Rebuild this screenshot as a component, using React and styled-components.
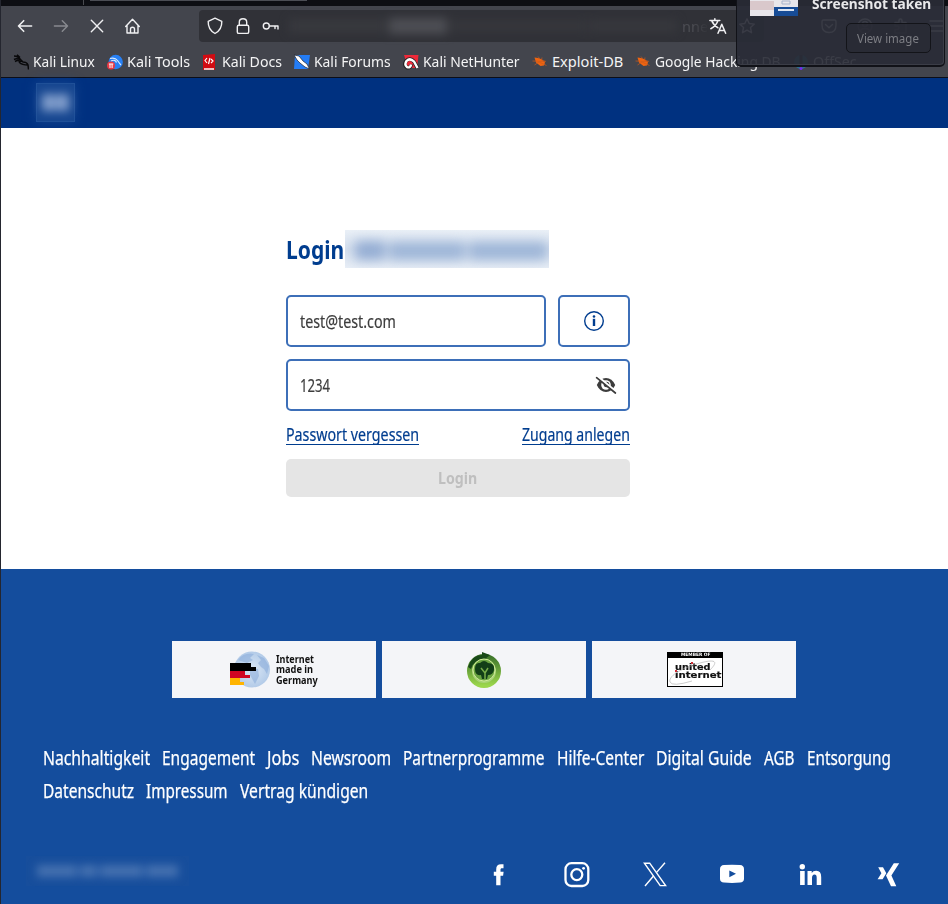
import React, { useLayoutEffect, useRef, useState } from "react";
import styled, { createGlobalStyle } from "styled-components";

const Global = createGlobalStyle`
  * { box-sizing: border-box; }
  body { margin: 0; background: #fff; font-family: "Noto Sans", "Open Sans", sans-serif; overflow: hidden; }
  a { color: inherit; text-decoration: none; }
`;

/* Sets a label at a fixed width, condensing its letters to fit. */
const FitBox = styled.span`
  display: block;
  flex: none;
  width: ${(p) => p.$w}px;
  white-space: nowrap;
`;
const FitInner = styled.span`
  display: inline-block;
  transform-origin: 0 0;
`;
function Fit({ w, children }) {
  const ref = useRef(null);
  const [s, setS] = useState(1);
  useLayoutEffect(() => {
    setS(w / ref.current.offsetWidth);
  }, [w]);
  return (
    <FitBox $w={w}>
      <FitInner ref={ref} style={{ transform: `scaleX(${s})` }}>{children}</FitInner>
    </FitBox>
  );
}

const Window = styled.div`
  position: relative;
  width: 948px;
  height: 904px;
  border-left: 1px solid #24262f;
  display: flex;
  flex-direction: column;
  overflow: hidden;
`;
const TabStrip = styled.div`
  height: 6px;
  flex: none;
  display: flex;
  background: #0d0e13;
`;
const TabDivider = styled.div`
  width: 1px;
  height: 5px;
  margin-left: 82px;
  background: #4a4b50;
`;
const TabEdge = styled.div`
  width: 217px;
  height: 1px;
  margin-left: 6px;
  background: #4b4d54;
`;
const Chrome = styled.div`
  height: 72px;
  flex: none;
  background: #43454d;
  border-bottom: 1px solid #0c0e18;
`;
const NavBar = styled.div`
  height: 40px;
  display: flex;
  align-items: center;
  color: #f0f0f2;
`;
const NavButtons = styled.div`
  width: 198px;
  display: flex;
  gap: 16px;
  padding-left: 14px;
`;
const Glyph = styled.svg`
  display: block;
  flex: none;
  width: ${(p) => p.$w || 20}px;
  height: ${(p) => p.$h || p.$w || 20}px;
  margin-left: ${(p) => p.$ml || 0}px;
  opacity: ${(p) => (p.$dim ? 0.4 : 1)};
  fill: none;
  stroke: currentColor;
  stroke-width: ${(p) => p.$sw || 1.4};
  stroke-linecap: round;
  stroke-linejoin: round;
`;
const UrlBar = styled.div`
  width: 565px;
  height: 32px;
  border-radius: 4px;
  background: #303137;
  display: flex;
  align-items: center;
  padding-left: 6px;
  flex: none;
`;
const UrlIcons = styled.div`
  display: flex;
  gap: 8px;
  width: 84px;
`;
const Obscured = styled.div`
  width: 393px;
  height: 20px;
  flex: none;
  display: flex;
  gap: 2px;
  align-items: center;
  filter: blur(5px);
`;
const Smudge = styled.div`
  width: ${(p) => p.$w}px;
  height: ${(p) => p.$h || 12}px;
  flex: none;
  background: ${(p) => p.$c};
`;
const UrlTail = styled.div`
  width: 27px;
  font-size: 14.5px;
  color: #4c4d53;
  overflow: hidden;
  -webkit-mask-image: linear-gradient(90deg, #000 40%, transparent);
  mask-image: linear-gradient(90deg, #000 40%, transparent);
`;
const Actions = styled.div`
  display: flex;
  gap: 16px;
  margin-left: 55px;
`;
const Bookmarks = styled.div`
  display: flex;
  height: 31px;
  padding-left: 12px;
  align-items: center;
  font-size: 14.6px;
  line-height: 20px;
  color: #f4f4f5;
`;
const Bookmark = styled.a`
  display: flex;
  align-items: center;
  width: ${(p) => p.$w}px;
  height: 20px;
  margin-top: -2px;
  flex: none;
  gap: 4px;
`;
const Favicon = styled.svg`
  display: block;
  width: 16px;
  height: 16px;
  flex: none;
  position: relative;
  top: 1px;
`;

const Toast = styled.div`
  position: absolute;
  left: 735px;
  top: -34px;
  width: 209px;
  height: 101px;
  border: 1px solid #111218;
  border-bottom-width: 2px;
  border-radius: 5px;
  background: rgba(41, 43, 54, 0.92);
  box-shadow: inset -1px -1px 0 #3b3d47;
  display: flex;
  padding: 1px 13px 12px 13px;
`;
const Thumb = styled.svg`
  display: block;
  width: 48px;
  height: 48px;
  flex: none;
`;
const ToastBody = styled.div`
  flex: 1;
  display: flex;
  flex-direction: column;
  align-items: flex-end;
  justify-content: flex-end;
`;
const ToastTitle = styled.div`
  color: #e8e8ea;
  font-weight: 700;
  font-size: 14.5px;
  line-height: 20px;
  margin-bottom: 10px;
`;
const ToastButton = styled.button`
  width: 85px;
  height: 30px;
  padding: 0 0 0 10px;
  border: 1px solid #131419;
  border-radius: 5px;
  background: rgba(41, 43, 52, 0.8);
  color: #7d7e84;
  font: 12.8px/20px "Noto Sans", sans-serif;
  text-align: left;
`;

const SiteHeader = styled.header`
  height: 50px;
  flex: none;
  background: #003180;
  padding: 6px 0 0 36px;
`;
const BlurredLogo = styled.div`
  width: 37px;
  height: 37px;
  display: flex;
  align-items: center;
  justify-content: center;
  background: #164690;
  outline: 1px solid #1f5098;
  box-shadow: 0 0 10px 1px #164690;
`;
const Soft = styled.div`
  display: flex;
  gap: ${(p) => p.$gap || 5}px;
  align-items: center;
  filter: blur(${(p) => p.$b}px);
`;

const Main = styled.main`
  height: 441px;
  flex: none;
  background: #fff;
  padding: 102px 0 0 285px;
`;
const Form = styled.form`
  width: 344px;
  display: flex;
  flex-direction: column;
`;
const TitleRow = styled.div`
  display: flex;
  height: 38px;
  margin-bottom: 27px;
  gap: 1px;
`;
const Title = styled.h1`
  margin: 0;
  color: #003d8f;
  font: 700 25px/38px "Noto Sans", sans-serif;
`;
const BlurredName = styled.div`
  width: 204px;
  height: 38px;
  overflow: hidden;
  background: linear-gradient(180deg, #eaf0f7 0, #d6e0ee 50%, #e8eef6 100%);
  padding: 11px 0 0 10px;
`;
const FieldRow = styled.div`
  display: flex;
  gap: 12px;
  margin-bottom: 12px;
`;
const Field = styled.div`
  flex: 1;
  height: 52px;
  border: 2px solid #3d6fb8;
  border-radius: 5px;
  display: flex;
  align-items: center;
  justify-content: space-between;
  padding: 0 10px 1px 12px;
  color: #3c3c3c;
  font-size: 18px;
  line-height: 26px;
  -webkit-text-stroke: 0.2px currentColor;
`;
const InfoButton = styled.button`
  width: 72px;
  height: 52px;
  padding: 0;
  border: 2px solid #3d6fb8;
  border-radius: 5px;
  background: #fff;
  color: #003d8f;
  display: flex;
  align-items: center;
  justify-content: center;
`;
const Links = styled.div`
  display: flex;
  justify-content: space-between;
  height: 25px;
  margin-bottom: 11px;
`;
const TextLink = styled.a`
  height: 22px;
  border-bottom: 1px solid #003d8f;
  color: #003d8f;
  font-size: 18px;
  line-height: 22px;
  -webkit-text-stroke: 0.2px currentColor;
`;
const Submit = styled.button`
  height: 38px;
  padding: 0 1px 0 0;
  border: 0;
  border-radius: 5px;
  background: #e5e5e5;
  color: #bfbfbf;
  font: 700 16px/38px "Noto Sans", sans-serif;
  display: flex;
  justify-content: center;
`;

const Footer = styled.footer`
  flex: 1;
  background: #144d9d;
  color: #fff;
`;
const Badges = styled.div`
  display: flex;
  gap: 6px;
  padding: 72px 0 0 171px;
`;
const Badge = styled.div`
  width: 204px;
  height: 57px;
  background: #f4f5f8;
  display: flex;
  align-items: center;
  justify-content: center;
`;
const GermanyLogo = styled.div`
  display: flex;
  gap: 5px;
  margin-left: -1px;
  color: #111;
  font: 700 10px/10.5px "Noto Sans", sans-serif;
`;
const Stack = styled.div`
  padding-top: 3px;
`;
const UnitedLogo = styled.div`
  position: relative;
  width: 56px;
  height: 35px;
  margin-left: 1px;
  border: 1px solid #000;
  background: #fff;
  color: #111;
  font: 700 9.5px/8px "DejaVu Sans", sans-serif;
`;
const MemberOf = styled.div`
  height: 5px;
  background: #000;
  color: #fff;
  font: 700 4.5px/4px "DejaVu Sans", sans-serif;
  padding-left: 13px;
`;
const UnitedText = styled.div`
  padding: 5px 0 0 7px;
  -webkit-text-stroke: 0.2px #111;
`;
const Orbit = styled.svg`
  position: absolute;
  left: 0;
  top: 5px;
  width: 54px;
  height: 28px;
`;
const FooterNav = styled.nav`
  padding: 43px 0 0 42px;
  font-size: 20px;
  line-height: 33px;
  -webkit-text-stroke: 0.25px currentColor;
`;
const FooterLine = styled.div`
  display: flex;
  gap: 12px;
`;
const Bottom = styled.div`
  display: flex;
  height: 50px;
  margin-top: 42px;
  align-items: center;
`;
const BlurredCopyright = styled.div`
  width: 163px;
  height: 30px;
  margin: -6px 0 0 25px;
  background: #174e9c;
  padding: 9px 11px;
`;
const Social = styled.div`
  display: flex;
  margin-left: 271px;
`;
const SocialLink = styled.a`
  width: 78px;
  height: 30px;
  display: flex;
  align-items: center;
  justify-content: center;
`;
const SocialIcon = styled.svg`
  display: block;
  width: 28px;
  height: 28px;
  fill: #fff;
`;

const dragon = "M1 2Q5 2 8 6L10 8Q14 8 15 11L15.5 15.5M15 11Q9 11 6.5 8.5Q6 7 9 7M8 6Q4 4 1 5.5M4 .8L7 3.5M2 7.5Q4.5 6 6.5 7";
const favicons = {
  linux: <path d={dragon} fill="none" stroke="#08080a" strokeWidth="1.5" />,
  tools: <><circle cx="8.7" cy="8" r="7.2" fill="#2780f5" /><path d="M3 4.5Q8 3 10.5 6.5T14 11M4 7Q8 5 9.5 8.5" stroke="#d9eaff" fill="none" strokeWidth="1.2" /><circle cx="4" cy="11.5" r="4" fill="#e63845" /><path d="M1.9 10h4.4M3 10v4M5.1 10v4" stroke="#fff" strokeWidth="1" /></>,
  docs: <><path d="M1 1L13 0V16H1Z" fill="#d20b12" /><path d="M2 14H12V16H2Z" fill="#f1bdbd" /><path d="M5 4L3 6.5 5 9M8 4L6.5 10M9 5L11 7 9 9" stroke="#fff" fill="none" strokeWidth="1.2" /></>,
  forums: <><path d="M1 1H16L14 15H0Z" fill="#247cf4" /><path d="M0 1L5 2 9 7 13 10 15.5 15 11 13 6 9 3 6Z" fill="#fff" stroke="#20232b" strokeWidth=".7" /></>,
  hunter: <><path d="M1 1H15.5L14 14H5Z" fill="#ed2939" /><path d="M14.5 14L11 7.5Q7 3 3 7Q.5 11 4 13.5Q8 14 8 10.5" fill="none" stroke="#222" strokeWidth="3.8" /><path d="M14.5 14L11 7.5Q7 3.5 3.5 7Q1 11 4.2 13.2Q7.5 14 8 10.5" fill="none" stroke="#fff" strokeWidth="2.4" /></>,
  bug: <><path d="M2.5 3.5L6 4 10 5.5 13 8.5 12 11.5 8.5 12 4 8.5Z" fill="#f06410" /><path d="M.5 7L13 7.5M2.5 11L7 8 14.5 11.5M6 2.5L8 5M10 3.5L9.5 6 14 7.5" stroke="#c95a1d" strokeWidth=".7" fill="none" /></>,
  offsec: <><circle cx="8" cy="8" r="7" fill="#2b7190" /><path d="M8 1V10" stroke="#252733" strokeWidth="3" /><circle cx="8" cy="14.5" r="1.5" fill="#7828ef" /></>,
};

const bookmarks = [
  ["linux", "Kali Linux", 62, 94],
  ["tools", "Kali Tools", 63, 95],
  ["docs", "Kali Docs", 60, 92],
  ["forums", "Kali Forums", 77, 109],
  ["hunter", "Kali NetHunter", 97, 129],
  ["bug", "Exploit-DB", 71, 103],
  ["bug", "Google Hacking DB", 126, 158],
  ["offsec", "OffSec", 44, 64],
];

const footerLinks = [
  [["Nachhaltigkeit", 107], ["Engagement", 93], ["Jobs", 32], ["Newsroom", 80], ["Partnerprogramme", 141.5], ["Hilfe-Center", 87.5], ["Digital Guide", 96], ["AGB", 30.5], ["Entsorgung", 84]],
  [["Datenschutz", 91], ["Impressum", 81.5], ["Vertrag kündigen", 128.5]],
];

const social = [
  <path d="M11.2 25.2V15.8H8.8V11.8H11.2V9.5C11.2 5.9 12.8 4.3 16 4.3H18.5V8.2H17C15.8 8.2 15.5 8.8 15.5 9.8V11.8H18.6L18.1 15.8H15.5V25.2Z" />,
  <g fill="none" stroke="#fff" strokeWidth="2.3"><rect x="2.5" y="3.2" width="22.8" height="22.8" rx="6" /><circle cx="13.8" cy="14.6" r="5.5" /><circle cx="20.6" cy="8.3" r="1.4" fill="#fff" stroke="none" /></g>,
  <g fill="none" stroke="#fff" strokeWidth="1.4"><path d="M3.4 3.2H8.7L24.6 25.6H19.2Z" /><path d="M24 2.7L15.6 12.4M12.7 15.8L4 26" /></g>,
  <path fillRule="evenodd" d="M5 5.1Q13 4.3 21 5.1 24.9 5.4 25 9V19Q24.8 22.3 21 22.6 13 23.4 5 22.6 1.1 22.3 1 19V9Q1.1 5.4 5 5.1ZM10.3 10.4V17.2L17 13.8Z" />,
  <><circle cx="5.3" cy="6.8" r="2.7" /><path d="M3.1 11H7.7V25H3.1ZM10.5 11H14.7V13Q16.1 10.6 19.3 10.7 24.2 10.7 24.2 17V25H19.7V17.8Q19.7 14.5 17.5 14.5 15 14.5 15 18V25H10.5Z" /></>,
  <><path d="M18.8 3.2H24.2L16.4 15.5 21.3 26.2H16L11 15.5Z" /><path d="M3.2 7.3H8L11.3 13.3 7.6 19.3H2.6L6.4 13.3Z" /></>,
];

export default function App() {
  return (
    <Window>
      <Global />
      <TabStrip><TabDivider /><TabEdge /></TabStrip>
      <Chrome>
        <NavBar>
          <NavButtons>
            <Glyph viewBox="0 0 20 20" $sw={1.6}><path d="M16.6 10H3.5M8.7 4.7L3.5 10 8.7 15.3" /></Glyph>
            <Glyph viewBox="0 0 20 20" $dim><path d="M3.4 10H16.5M11.3 4.7L16.5 10 11.3 15.3" /></Glyph>
            <Glyph viewBox="0 0 20 20"><path d="M4.3 4.3L15.7 15.7M15.7 4.3L4.3 15.7" /></Glyph>
            <Glyph viewBox="0 0 20 20"><path d="M2.7 10.5L9.5 3.3 16.3 10.5M4 9.5V17H15V9.5M7.5 16.7V13Q7.5 11.2 9.5 11.2T11.5 13V16.7" /></Glyph>
          </NavButtons>
          <UrlBar>
            <UrlIcons>
              <Glyph viewBox="0 0 20 20"><path d="M10 2.2L16.8 5.3C17 11 14.8 15 10 17.5C5.2 15 3 11 3.2 5.3Z" /></Glyph>
              <Glyph viewBox="0 0 20 20"><rect x="4.3" y="9.2" width="11.4" height="8.2" rx="1.5" /><path d="M6.3 9V6.2Q6.3 2.8 10 2.8T13.7 6.2V9" /></Glyph>
              <Glyph viewBox="0 0 20 20"><circle cx="5.3" cy="10" r="3" /><path d="M8.5 10H17V13M14 10V12.5" /></Glyph>
            </UrlIcons>
            <Obscured>
              <Smudge $w={98} $h={14} $c="#38393e" /><Smudge $w={58} $h={16} $c="#4d4e54" /><Smudge $w={138} $c="#36373c" /><Smudge $w={88} $c="#37383d" />
            </Obscured>
            <UrlTail>nne</UrlTail>
            <Glyph viewBox="0 0 20 20" $w={18} $sw={1.7}><path d="M1 4H12M6.5 2V4M3 4Q5 9 10 12M10 4Q8 10 2 13M10 18L14.2 8 18.5 18M11.5 15H17" /></Glyph>
            <Glyph viewBox="0 0 20 20" $ml={10}><path d="M10 2.8L12.2 7.5 17.3 8.1 13.5 11.6 14.5 16.7 10 14.1 5.5 16.7 6.5 11.6 2.7 8.1 7.8 7.5Z" /></Glyph>
          </UrlBar>
          <Actions>
            <Glyph viewBox="0 0 20 20"><path d="M4.5 4H15.5Q17 4 17 6V9Q17 16.5 10 16.5T3 9V6Q3 4 4.5 4ZM6.5 8.5L10 11.8 13.5 8.5" /></Glyph>
            <Glyph viewBox="0 0 20 20"><circle cx="10" cy="10" r="7" /><circle cx="10" cy="8" r="2.5" /><path d="M5.5 15Q6 12.5 10 12.5T14.5 15" /></Glyph>
            <Glyph viewBox="0 0 20 20"><path d="M4 6.5H8V4.5Q8 3 9.5 3T11 4.5V6.5H15V17H4V13.5H6Q8 13.5 8 11.8T6 10H4Z" /></Glyph>
            <Glyph viewBox="0 0 20 20"><path d="M3 5H17M3 10H17M3 15H17" /></Glyph>
          </Actions>
        </NavBar>
        <Bookmarks>
          {bookmarks.map(([icon, label, w, total]) => (
            <Bookmark key={label} $w={total}>
              <Favicon viewBox="0 0 16 16">{favicons[icon]}</Favicon>
              <Fit w={w}>{label}</Fit>
            </Bookmark>
          ))}
        </Bookmarks>
      </Chrome>

      <SiteHeader>
        <BlurredLogo>
          <Soft $b={5} $gap={1}><Smudge $w={13} $h={17} $c="#84a0cd" /><Smudge $w={13} $h={17} $c="#84a0cd" /></Soft>
        </BlurredLogo>
      </SiteHeader>

      <Main>
        <Form>
          <TitleRow>
            <Title><Fit w={58}>Login</Fit></Title>
            <BlurredName>
              <Soft $b={6} $gap={4}><Smudge $w={30} $h={19} $c="#94add3" /><Smudge $w={76} $h={18} $c="#9db5d7" /><Smudge $w={78} $h={18} $c="#9db5d7" /></Soft>
            </BlurredName>
          </TitleRow>
          <FieldRow>
            <Field><Fit w={96}>test@test.com</Fit></Field>
            <InfoButton type="button" aria-label="Info">
              <Glyph viewBox="0 0 22 22" $w={22}><circle cx="11" cy="11" r="9.3" /><path d="M11 8.8V16" strokeWidth="2.4" strokeLinecap="butt" /><circle cx="11" cy="6.5" r="1.3" fill="currentColor" stroke="none" /></Glyph>
            </InfoButton>
          </FieldRow>
          <FieldRow>
            <Field>
              <Fit w={30}>1234</Fit>
              <Glyph viewBox="0 0 24 24" $w={24}>
                <path d="M2.8 12Q6 5 12 5T21.2 12Q18 19 12 19T2.8 12Z" fill="#3c3c3c" stroke="none" />
                <circle cx="12" cy="12" r="4.8" fill="#fff" stroke="none" />
                <circle cx="12.5" cy="11.5" r="2.8" fill="#3c3c3c" stroke="none" />
                <path d="M3.2 3.3L22 19.2" stroke="#fff" strokeWidth="3" />
                <path d="M2.6 4.7L21.4 20" stroke="#3c3c3c" strokeWidth="1.7" />
              </Glyph>
            </Field>
          </FieldRow>
          <Links>
            <TextLink href="#"><Fit w={133}>Passwort vergessen</Fit></TextLink>
            <TextLink href="#"><Fit w={108}>Zugang anlegen</Fit></TextLink>
          </Links>
          <Submit type="button" disabled><Fit w={39}>Login</Fit></Submit>
        </Form>
      </Main>

      <Footer>
        <Badges>
          <Badge>
            <GermanyLogo>
              <svg width="41" height="38" viewBox="0 0 41 38">
                <defs><radialGradient id="globe"><stop offset="0" stopColor="#dce8f6" /><stop offset="1" stopColor="#b3cbe8" /></radialGradient></defs>
                <circle cx="22" cy="18.5" r="18" fill="url(#globe)" />
                <path d="M8 9Q14 1 24 3L20 7 23 9 17 12ZM27 4L34 7 39 15 37 23 34 18 31 16 28 12 31 9ZM20 17L28 18 29 25 25 33 20 24Z" fill="#86aad8" opacity=".55" />
                <path d="M0 12H21V16H26V20H0Z" fill="#000" />
                <path d="M0 20H15V24H20V27H0Z" fill="#d00522" />
                <path d="M0 27H10V31H14V34H0Z" fill="#ffb400" />
              </svg>
              <Stack><Fit w={38}>Internet</Fit><Fit w={37}>made in</Fit><Fit w={42}>Germany</Fit></Stack>
            </GermanyLogo>
          </Badge>
          <Badge>
            <svg width="38" height="38" viewBox="0 0 38 38">
              <defs><linearGradient id="leaf" x2="0" y2="1"><stop stopColor="#3e762b" /><stop offset="1" stopColor="#9bd64c" /></linearGradient></defs>
              <circle cx="19" cy="20" r="14.5" fill="#a8d477" stroke="url(#leaf)" strokeWidth="5" />
              <path d="M3 16Q7 4 17 4L17 1 25 4 20 8Q9 8 6 18Z" fill="#194919" />
              <circle cx="19" cy="19" r="11" fill="#69a440" stroke="#d2ec9c" />
              <path d="M10 18Q10 11 15 12Q19 8 23 12Q30 12 29 19Q28 24 23 24L22 28H17L16 24Q10 25 10 18Z" fill="#123f17" />
              <path d="M16 17L20 22 23 17M20 22V28" stroke="#77ad49" fill="none" strokeWidth="1.5" />
            </svg>
          </Badge>
          <Badge>
            <UnitedLogo>
              <MemberOf><Fit w={29}>MEMBER OF</Fit></MemberOf>
              <UnitedText><Fit w={36}>united</Fit><Fit w={46}>internet</Fit></UnitedText>
              <Orbit viewBox="0 0 54 28"><path d="M2 24C0 17 17 9 32 5S51 3 42 12M2 24Q4 29 24 23" fill="none" stroke="#aaa" strokeWidth=".6" /><path d="M23 4h2v2h-2zM7 12h2v2H7z" fill="#d12c35" /></Orbit>
            </UnitedLogo>
          </Badge>
        </Badges>
        <FooterNav>
          {footerLinks.map((line, i) => (
            <FooterLine key={i}>{line.map(([t, w]) => <a href="#" key={t}><Fit w={w}>{t}</Fit></a>)}</FooterLine>
          ))}
        </FooterNav>
        <Bottom>
          <BlurredCopyright>
            <Soft $b={4} $gap={3}><Smudge $w={40} $c="#4571b0" /><Smudge $w={17} $c="#4571b0" /><Smudge $w={43} $c="#4571b0" /><Smudge $w={32} $c="#4571b0" /></Soft>
          </BlurredCopyright>
          <Social>
            {social.map((s, i) => <SocialLink href="#" key={i}><SocialIcon viewBox="0 0 28 28">{s}</SocialIcon></SocialLink>)}
          </Social>
        </Bottom>
      </Footer>

      <Toast>
        <Thumb viewBox="0 0 48 48"><path d="M0 0H48V48H0Z" fill="#e8e6ea" /><path d="M0 33H24V42H0Z" fill="#d9c8cb" /><path d="M24 39H48V48H24Z" fill="#174c96" /><path d="M28 41H44V43H28Z" fill="#dce5f2" /><path d="M32 33H40V36H32Z" fill="none" stroke="#a8b4cb" /></Thumb>
        <ToastBody>
          <ToastTitle><Fit w={119}>Screenshot taken</Fit></ToastTitle>
          <ToastButton><Fit w={62}>View image</Fit></ToastButton>
        </ToastBody>
      </Toast>
    </Window>
  );
}
